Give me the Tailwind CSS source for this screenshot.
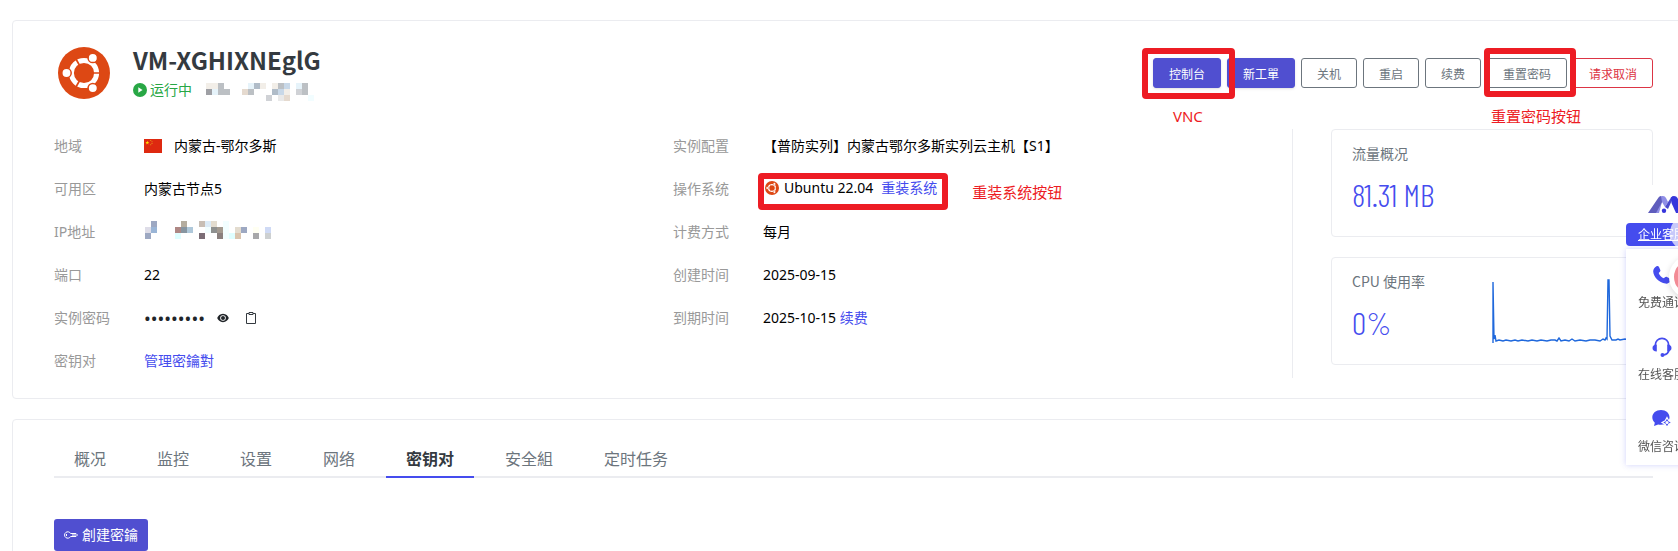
<!DOCTYPE html>
<html lang="zh-CN">

<head>
  <meta charset="UTF-8">
  <meta name="viewport" content="width=device-width, initial-scale=1.0">
  <title>VM-XGHIXNEglG</title>
  <script src="https://cdn.jsdelivr.net/npm/@tailwindcss/browser@4"></script>
</head>

<body class="bg-white overflow-x-hidden text-sm text-black font-['Noto_Sans','Noto_Sans_CJK_SC',sans-serif]">

  <!-- 图标 -->
  <svg class="hidden">
    <symbol id="icon-ubuntu" viewBox="0 0 52 52">
      <circle cx="26" cy="26" r="26" fill="#dd4814" />
      <circle cx="26" cy="26" r="12.6" fill="none" stroke="#fff" stroke-width="5" />
      <path d="M35 26h8M21.5 18.2l-4-6.9M21.5 33.8l-4 6.9" stroke="#dd4814" stroke-width="1.7" />
      <g fill="#fff" stroke="#dd4814" stroke-width="1.5">
        <circle cx="8.5" cy="26" r="4.7" />
        <circle cx="34.8" cy="10.9" r="4.7" />
        <circle cx="34.8" cy="41.1" r="4.7" />
      </g>
    </symbol>
  </svg>

  <main class="pt-5 pl-3 -mr-[17px]">

    <!-- 实例信息 -->
    <section class="border border-[#ebecf0] rounded px-[41px] pt-[25px] pb-5">
      <header class="flex items-start">
        <svg class="w-[52px] h-[52px] ml-1 mt-px shrink-0"><use href="#icon-ubuntu" /></svg>
        <div class="ml-[23px]">
          <h1 class="text-2xl leading-7 font-bold text-[#343a40] font-['Noto_Sans_CJK_SC',sans-serif]">VM-XGHIXNEglG</h1>
          <div class="flex items-center h-8 text-[#28a745]">
            <svg class="w-[14px] h-[14px] mr-[3px]" viewBox="0 0 14 14">
              <circle cx="7" cy="7" r="7" fill="#28a745" />
              <path d="M5.3 4.2v5.6L9.6 7z" fill="#fff" />
            </svg>
            <span>运行中</span>
            <svg class="w-[108px] h-[18px] ml-[14px] mt-1" viewBox="0 0 18 3" shape-rendering="crispEdges">
              <path fill="#f2eee8" d="M0 0h2v1h-2zM9 0h1v1h-1zM11 0h1v1h-1zM13 1h1v1h-1z" />
              <path fill="#bcc0c4" d="M2 0h1v1h1v1h-2zM7 1h1v1h-1zM12 0h1v1h-1zM16 0h1v2h-1z" />
              <path fill="#b0bcc8" d="M8 0h1v1h-1zM11 1h1v1h-1z" />
              <path fill="#9fa0a5" d="M0 1h1v1h-1z" />
              <path fill="#e6f3fa" d="M1 1h1v1h-1zM7 0h1v1h-1zM15 0h1v1h-1z" />
              <path fill="#f2fdff" d="M17 2h1v1h-1z" />
              <path fill="#e5dacf" d="M6 1h1v1h-1zM13 2h1v1h-1z" />
              <path fill="#d0d2d6" d="M10 2h1v1h-1zM15 1h1v1h-1z" />
              <path fill="#c8d8e8" d="M12 1h1v1h-1zM13 0h1v1h-1z" />
              <path fill="#e9e9e9" d="M12 2h1v1h-1z" />
            </svg>
          </div>
        </div>

        <div class="ml-auto mt-3 flex gap-[6px] text-xs">
          <div class="relative">
            <button type="button" class="h-[30px] px-[15px] pt-[3px] border border-[#504fd0] rounded-[3px] bg-[#504fd0] text-white shadow-sm">控制台</button>
            <span class="absolute z-10 -left-[11px] -right-[14px] -top-[10px] -bottom-[11px] border-6 border-[#ed1c24] rounded"></span>
            <span class="absolute top-[46px] left-5 text-[15px] leading-6 text-[#ed1c24]">VNC</span>
          </div>
          <button type="button" class="h-[30px] px-[15px] pt-[3px] border border-[#504fd0] rounded-[3px] bg-[#504fd0] text-white shadow-sm">新工單</button>
          <button type="button" class="h-[30px] px-[15px] pt-[3px] border border-[#6c757d] rounded-[3px] text-[#6c757d]">关机</button>
          <button type="button" class="h-[30px] px-[15px] pt-[3px] border border-[#6c757d] rounded-[3px] text-[#6c757d]">重启</button>
          <button type="button" class="h-[30px] px-[15px] pt-[3px] border border-[#6c757d] rounded-[3px] text-[#6c757d]">续费</button>
          <div class="relative">
            <button type="button" class="h-[30px] px-[15px] pt-[3px] border border-[#6c757d] rounded-[3px] text-[#6c757d]">重置密码</button>
            <span class="absolute z-10 -left-[3px] -right-[9px] -top-[10px] -bottom-[9px] border-6 border-[#ed1c24] rounded"></span>
            <span class="absolute top-[46px] left-1 whitespace-nowrap text-[15px] leading-6 text-[#ed1c24]">重置密码按钮</span>
          </div>
          <button type="button" class="h-[30px] px-[15px] pt-[3px] border border-[#dc3545] rounded-[3px] text-[#dc3545]">请求取消</button>
        </div>
      </header>

      <div class="flex mt-[23px]">
        <div class="flex-1 grid grid-cols-2 items-start">
          <dl class="grid grid-cols-[90px_1fr] auto-rows-[34px] gap-y-[9px] items-center">
            <dt class="text-[#999]">地域</dt>
            <dd class="flex items-center">
              <svg class="w-[18px] h-[14px] mr-3" viewBox="0 0 18 14">
                <path fill="#de2910" d="M0 0h18v14H0z" />
                <path fill="#ffde00" d="M3.3 1.8l.5 1.3h1.4l-1.1.9.4 1.4-1.2-.8-1.2.8.4-1.4-1.1-.9h1.4z" />
                <path fill="#e8901a" d="M6.2 1h1v1h-1zM7.5 2.3h1v1h-1zM7.5 4h1v1h-1zM6.2 5.3h1v1h-1z" />
              </svg>
              内蒙古-鄂尔多斯
            </dd>
            <dt class="text-[#999]">可用区</dt>
            <dd>内蒙古节点5</dd>
            <dt class="text-[#999]">IP地址</dt>
            <dd>
              <svg class="w-[126px] h-[18px] ml-px mb-1" viewBox="0 0 21 3" shape-rendering="crispEdges">
                <path fill="#9da8c2" d="M1 0h1v1h-1zM0 2h1v1h-1zM16 1h1v1h-1z" />
                <path fill="#dedde8" d="M0 1h1v1h-1z" />
                <path fill="#9ab5d6" d="M1 1h1v1h-1z" />
                <path fill="#b5ad9f" d="M6 0h1v1h-1z" />
                <path fill="#c8beb5" d="M9 0h1v1h-1z" />
                <path fill="#dcebf7" d="M10 0h1v1h-1z" />
                <path fill="#e3dccf" d="M11 0h1v1h-1zM15 1h1v1h-1z" />
                <path fill="#f2feff" d="M13 0h1v3h-1zM10 1h1v1h-1z" />
                <path fill="#ae8784" d="M5 1h1v1h-1z" />
                <path fill="#8795a0" d="M6 1h1v1h-1z" />
                <path fill="#afc8da" d="M7 1h1v1h-1z" />
                <path fill="#8e908f" d="M11 1h1v1h-1z" />
                <path fill="#a39a90" d="M12 1h1v1h-1z" />
                <path fill="#fffff2" d="M18 1h1v1h-1z" />
                <path fill="#cfdaf5" d="M20 1h1v1h-1z" />
                <path fill="#dffeff" d="M5 2h1v1h-1zM14 2h1v1h-1z" />
                <path fill="#7b6d76" d="M9 2h1v1h-1z" />
                <path fill="#8a807e" d="M12 2h1v1h-1z" />
                <path fill="#d9c4ae" d="M15 2h1v1h-1z" />
                <path fill="#a8a8aa" d="M18 2h1v1h-1z" />
                <path fill="#cdd0d1" d="M20 2h1v1h-1z" />
              </svg>
            </dd>
            <dt class="text-[#999]">端口</dt>
            <dd>22</dd>
            <dt class="text-[#999]">实例密码</dt>
            <dd class="flex items-center text-[#212529]">
              <span class="text-lg leading-5">•••••••••</span>
              <button type="button" aria-label="显示密码" class="ml-3">
                <svg class="w-3 h-3" viewBox="0 0 12 12">
                  <path fill="#212529" d="M6 1.8C3 1.8 1 4 .2 6 1 8 3 10.2 6 10.2S11 8 11.8 6C11 4 9 1.8 6 1.8z" />
                  <circle cx="6" cy="6" r="2.8" fill="#fff" />
                  <circle cx="6" cy="6" r="2" fill="#212529" />
                </svg>
              </button>
              <button type="button" aria-label="复制密码" class="ml-4">
                <svg class="w-3 h-3" viewBox="0 0 12 12" fill="none" stroke="#343a40">
                  <path d="M4 1.5H1.5v10h9v-10H8" />
                  <path d="M4 .5h4v2H4z" />
                </svg>
              </button>
            </dd>
            <dt class="text-[#999]">密钥对</dt>
            <dd><a href="#" class="text-[#454cee]">管理密鑰對</a></dd>
          </dl>

          <dl class="grid grid-cols-[90px_1fr] auto-rows-[34px] gap-y-[9px] items-center">
            <dt class="text-[#999]">实例配置</dt>
            <dd>【普防实列】内蒙古鄂尔多斯实列云主机【S1】</dd>
            <dt class="text-[#999]">操作系统</dt>
            <dd>
              <div class="relative inline-flex items-center">
                <svg class="w-[14px] h-[14px] ml-[2px] mr-[5px]"><use href="#icon-ubuntu" /></svg>
                Ubuntu 22.04
                <a href="#" class="ml-2 text-[#454cee]">重装系统</a>
                <span class="absolute z-10 -left-[5px] -right-[11px] -top-[5px] -bottom-3 border-6 border-[#ed1c24] rounded"></span>
                <span class="absolute top-[2px] left-full ml-[35px] whitespace-nowrap text-[15px] leading-6 text-[#ed1c24]">重装系统按钮</span>
              </div>
            </dd>
            <dt class="text-[#999]">计费方式</dt>
            <dd>每月</dd>
            <dt class="text-[#999]">创建时间</dt>
            <dd>2025-09-15</dd>
            <dt class="text-[#999]">到期时间</dt>
            <dd>2025-10-15 <a href="#" class="text-[#454cee]">续费</a></dd>
          </dl>
        </div>

        <!-- 用量 -->
        <aside class="w-[361px] pl-[38px] border-l border-[#ebecf0] flex flex-col gap-5 font-['Noto_Sans_CJK_SC',sans-serif]">
          <div class="h-[108px] border border-[#ebecf0] rounded px-5 pt-[13px]">
            <h2 class="leading-5 text-[#6c757d]">流量概况</h2>
            <p class="mt-[11px] text-[32px] leading-10 font-light text-[#454cee] font-['Barlow_Condensed','Roboto_Condensed',Roboto,sans-serif]">81.31 MB</p>
          </div>
          <div class="h-[108px] border border-[#ebecf0] rounded pl-5 pt-[13px] flex">
            <div class="w-[140px]">
              <h2 class="leading-5 text-[#6c757d]">CPU 使用率</h2>
              <p class="mt-[11px] text-[32px] leading-10 font-light text-[#454cee] font-['Barlow_Condensed','Roboto_Condensed',Roboto,sans-serif]">0%</p>
            </div>
            <svg class="w-[160px] h-[64px] mt-2" viewBox="0 0 160 64" fill="none" stroke="#1f68dc" stroke-width="1.4">
              <path d="M1 64V3l1 57 1-4 1 6 3-1 4 1 3-1 5 1 4-1 3 1 4-1 6 1 4-1 5 1 4-1 6 1 4-1 4 0 2 1 2-3 2 3 4-1 4 1 3-2 3 2 5-1 6 1 4-1 5 0 5 1 3-2 2 1 1-2 1 1 1-59h1l1 56 2 4 4 0 2-1 2 1 5-1 5 1 5-1 10 1 16-1" />
            </svg>
          </div>
        </aside>
      </div>
    </section>

    <!-- 选项卡 -->
    <section class="mt-5 border border-[#ebecf0] rounded px-[41px] pt-5 pb-10">
      <nav class="flex gap-[11px] border-b-2 border-[#ebecf0] text-base text-[#6c757d]">
        <a href="#" class="h-[38px] leading-[38px] px-5 -mb-[2px]">概况</a>
        <a href="#" class="h-[38px] leading-[38px] px-5 -mb-[2px]">监控</a>
        <a href="#" class="h-[38px] leading-[38px] px-5 -mb-[2px]">设置</a>
        <a href="#" class="h-[38px] leading-[38px] px-5 -mb-[2px]">网络</a>
        <a href="#" class="h-[38px] leading-[38px] px-5 -mb-[2px] border-b-2 border-[#454cee] font-bold text-[#343a40]">密钥对</a>
        <a href="#" class="h-[38px] leading-[38px] px-5 -mb-[2px]">安全組</a>
        <a href="#" class="h-[38px] leading-[38px] px-5 -mb-[2px]">定时任务</a>
      </nav>
      <button type="button" class="mt-[41px] h-8 px-[10px] flex items-center rounded-[3px] bg-[#504fd0] text-white">
        <svg class="w-[14px] h-2 mr-1" viewBox="0 0 14 8" fill="none" stroke="#fff">
          <path d="M6.6 2.5A3.2 3.2 0 1 0 6.6 5.5H12L13.5 4 12 2.5z" />
          <path d="M2.5 3v2M8 4h4" />
        </svg>
        創建密鑰
      </button>
    </section>
  </main>

  <!-- 客服侧栏 -->
  <aside class="fixed top-[185px] -right-5 w-[72px] text-xs text-[#555]">
    <div class="ml-4 h-[38px] bg-white pt-[11px]">
      <svg class="w-9 h-[17px] ml-[6px]" viewBox="0 0 36 17">
        <path fill="#8f8ee6" d="M11 1.5Q12 0 14 0h1q2 0 3 2l2 4-3 5-3-5-3 11H5z" />
        <path fill="#5f5dbd" d="M9.5 3Q11 0 13 0l1 6-6 11H0z" />
        <path fill="#4a49cc" d="M19.5 7L23 1.5Q24 0 26 0l-6 13-3-2z" />
        <path fill="#3635dc" d="M23 1.5Q24 0 26 0q2.500 0 3.500 2L36 17h-8L23.500 7z" />
        <circle cx="16" cy="14.8" r="2.2" fill="#3635dc" />
      </svg>
    </div>
    <a href="#" class="block h-[23px] leading-6 rounded-sm bg-[#454cee] text-white text-center underline">企业客服</a>
    <div class="mt-[3px] h-[216px] pt-4 bg-white text-center shadow-[0_0_6px_#454cee40]">
      <a href="#" class="block h-[72px]">
        <svg class="w-5 h-5 mx-auto" viewBox="0 0 20 20" fill="#454cee">
          <path d="M4.5 1.2C5.6.6 6.5 1 7 2l1.3 3c.3.8 0 1.5-.6 2l-1 .9c.9 2.3 2.8 4.3 5.2 5.4l1-1c.6-.6 1.3-.8 2-.4l3 1.5c1 .5 1.3 1.4.8 2.3-1 1.9-3 3.2-5.2 2.9C6.9 17.7 1.5 11.8 1.2 6.5 1.1 4.3 2.5 2.3 4.5 1.2z" />
        </svg>
        <span class="block mt-2 leading-5">免费通话</span>
      </a>
      <a href="#" class="block h-[72px]">
        <svg class="w-5 h-5 mx-auto" viewBox="0 0 20 20">
          <path d="M3.3 9V8a6.7 6.7 0 0 1 13.4 0v1M17 13c-.5 3-2.5 4.5-5.5 5" fill="none" stroke="#454cee" stroke-width="1.7" />
          <path fill="#454cee" d="M4.8 7.5v7C2 14.5.5 13 .5 11s1.5-3.5 4.3-3.5zM15.2 7.5v7c2.8 0 4.3-1.5 4.3-3.5s-1.5-3.5-4.3-3.5z" />
          <circle cx="10.5" cy="18" r="2" fill="#454cee" />
        </svg>
        <span class="block mt-2 leading-5">在线客服</span>
      </a>
      <a href="#" class="block h-[72px]">
        <svg class="w-5 h-5 mx-auto" viewBox="0 0 20 20">
          <path fill="#454cee" d="M9 1c5 0 8.500 3.200 8.500 7.200 0 4.300-3.500 7.500-8.500 7.500-1 0-2 0-2.800-.3L2 17l.8-3.300C1.200 12.300.3 10.500.3 8.300.3 4.200 4 1 9 1z" />
          <path fill="#454cee" stroke="#fff" stroke-width="1.2" d="M15 8.500l1.800 3.200L20 13.500l-3.200 1.800L15 18.500l-1.800-3.200L10 13.500l3.200-1.800z" />
          <circle cx="15" cy="13.5" r="1.5" fill="#fff" />
        </svg>
        <span class="block mt-2 leading-5">微信咨询</span>
      </a>
    </div>
    <!-- 悬浮按钮 -->
    <span class="absolute top-[30px] left-[44px] w-9 h-9 rounded-full bg-white/70"></span>
    <span class="absolute top-[70px] left-[43px] w-11 h-11 rounded-full bg-[#f28b95] border-5 border-white shadow-[0_2px_6px_#00000026]"></span>
  </aside>

</body>

</html>
